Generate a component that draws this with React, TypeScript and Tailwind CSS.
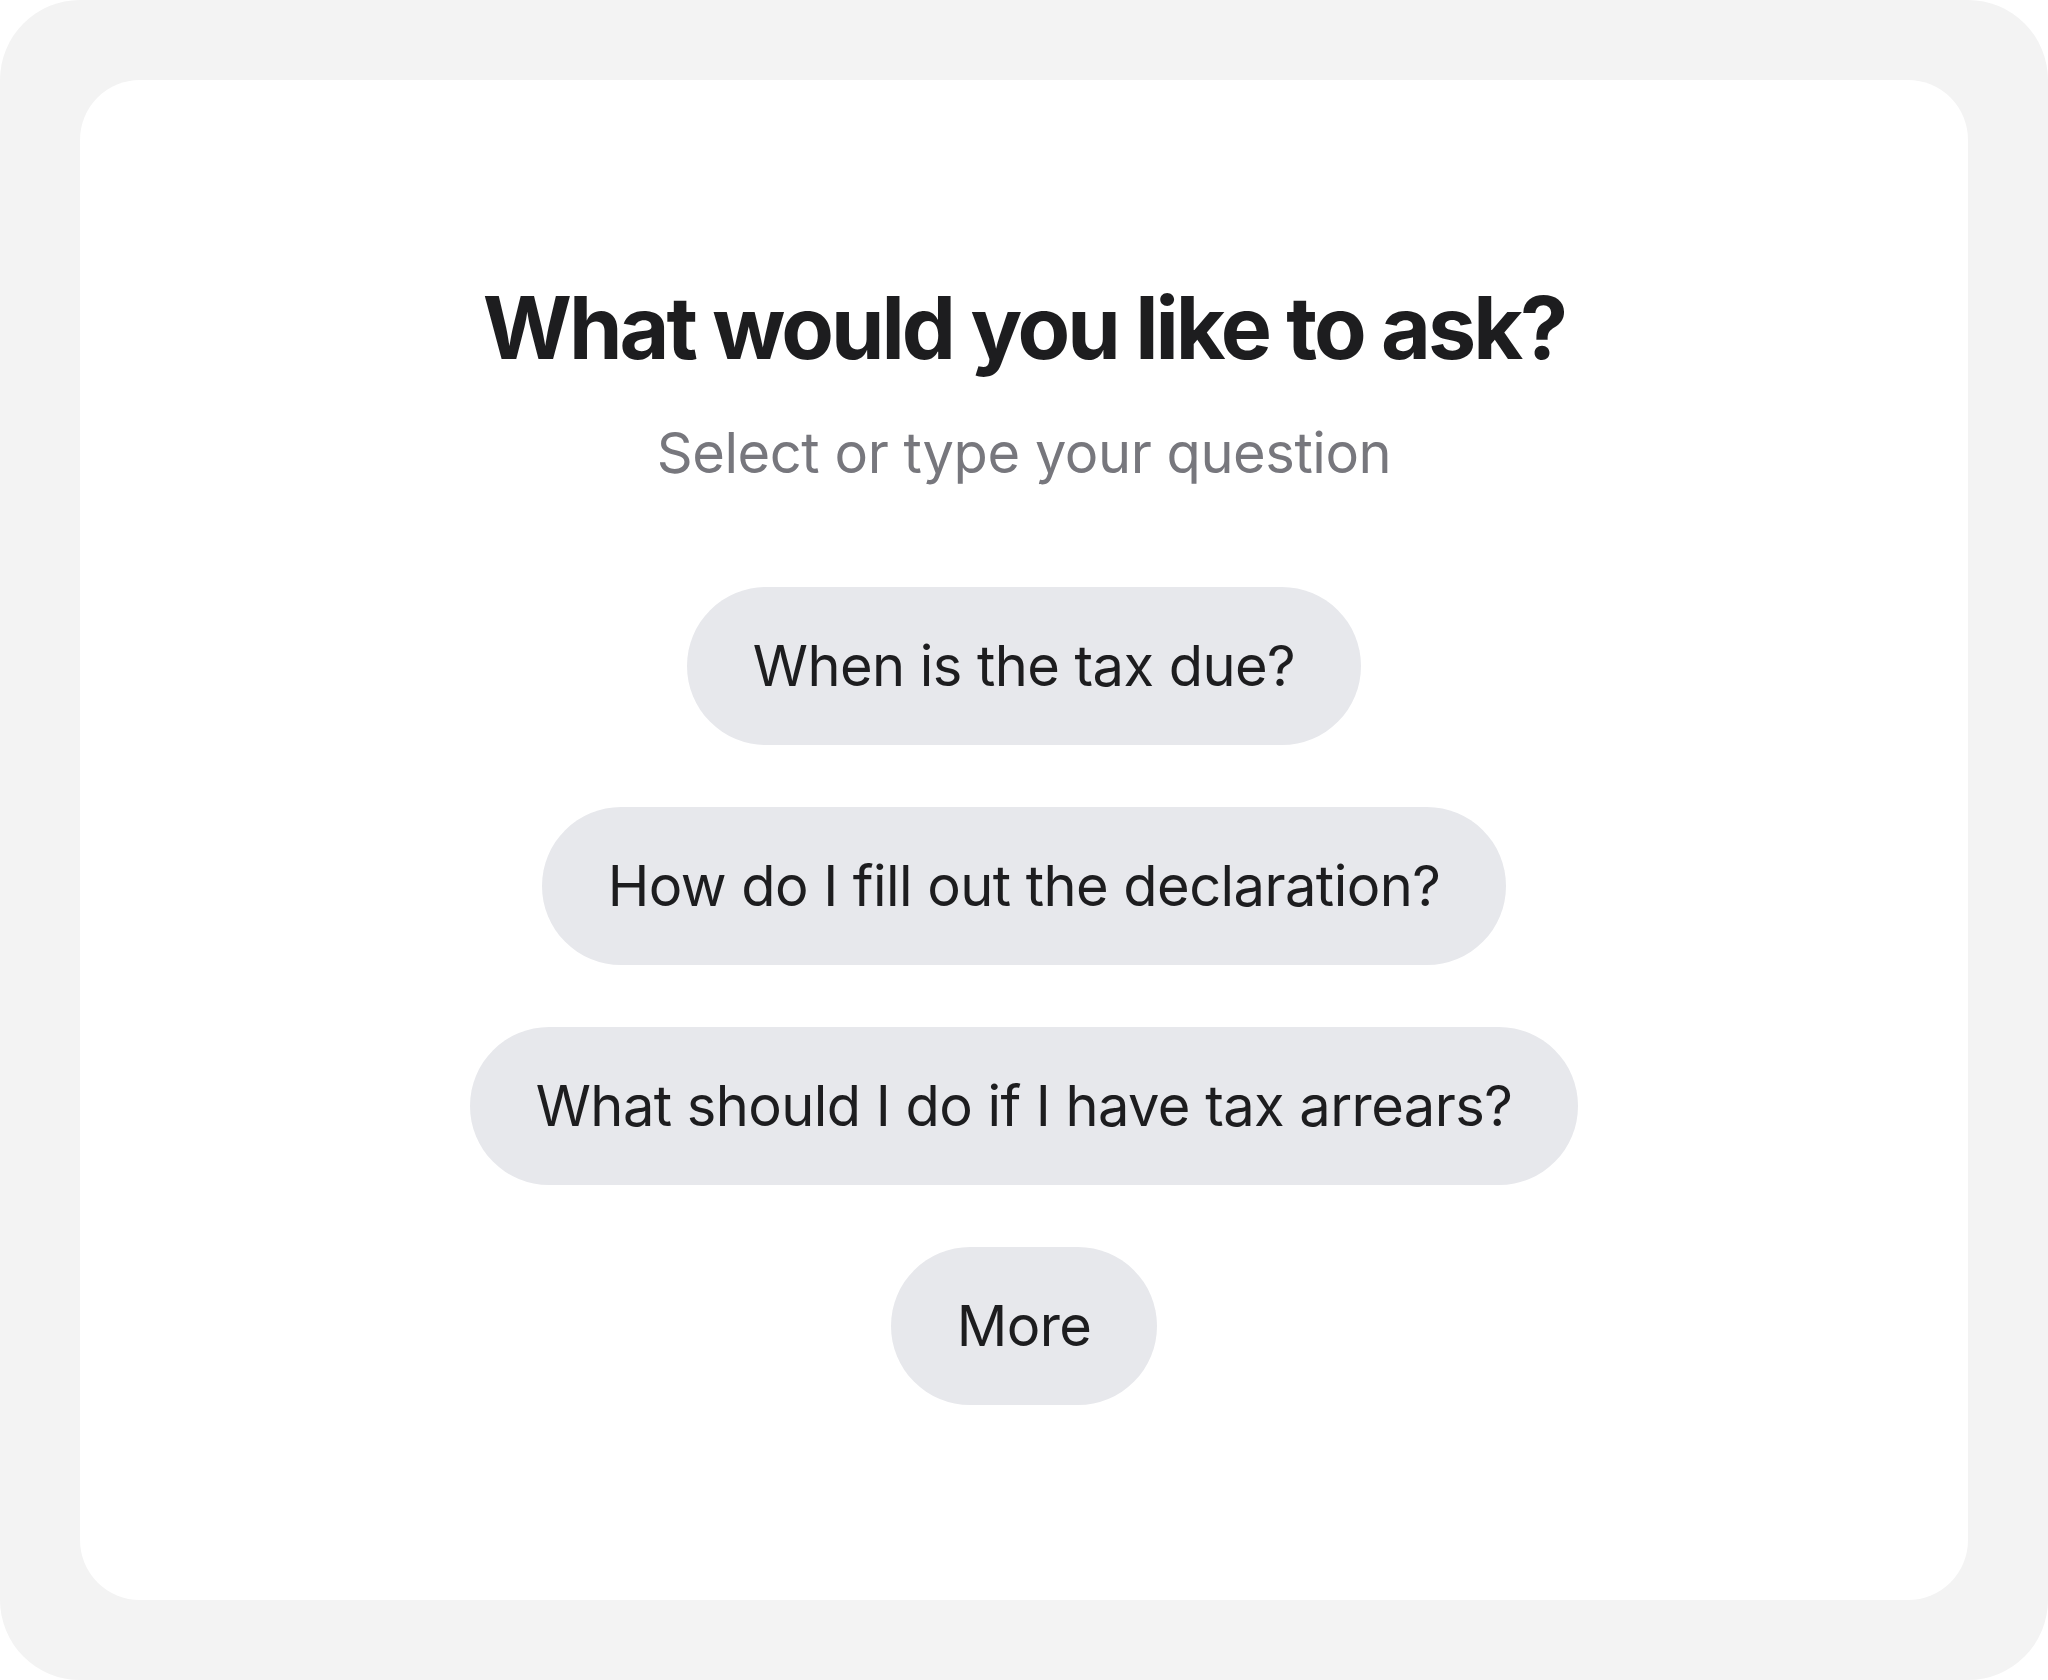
// ─── App ───────────────────────────────────────────────────────────────────────
// Question picker: heading, hint line and a stack of pill-shaped suggestions.
// ──────────────────────────────────────────────────────────────────────────────

import React from 'react';

const QUESTIONS = [
  'When is the tax due?',
  'How do I fill out the declaration?',
  'What should I do if I have tax arrears?',
  'More',
];

const Pill: React.FC<{ label: string }> = ({ label }) => (
  <button
    type="button"
    className="h-[158px] px-[66px] rounded-full bg-[#e7e8ec] text-[#1d1d1f]
               text-[56px] leading-[1.2] tracking-[-0.01em] flex items-center"
  >
    {label}
  </button>
);

const App: React.FC = () => (
  <div
    className="w-[2048px] h-[1680px] bg-white"
    style={{ fontFamily: 'Inter, "Noto Sans", "Liberation Sans", sans-serif' }}
  >
    <div className="w-full h-full rounded-[80px] bg-[#f3f3f3] p-[80px]">
      <main className="w-full h-full rounded-[60px] bg-white pt-[2px] flex flex-col items-center justify-center">
        <h1 className="text-[86px] leading-[1.2] font-bold tracking-[-0.035em] text-[#1d1d1f]">
          What would you like to ask?
        </h1>
        <p className="mt-[40px] text-[56px] leading-[1.2] tracking-[-0.008em] text-[#77777d]">
          Select or type your question
        </p>

        <div className="mt-[100px] flex flex-col items-center gap-[62px]">
          {QUESTIONS.map((q) => (
            <Pill key={q} label={q} />
          ))}
        </div>
      </main>
    </div>
  </div>
);

export default App;
